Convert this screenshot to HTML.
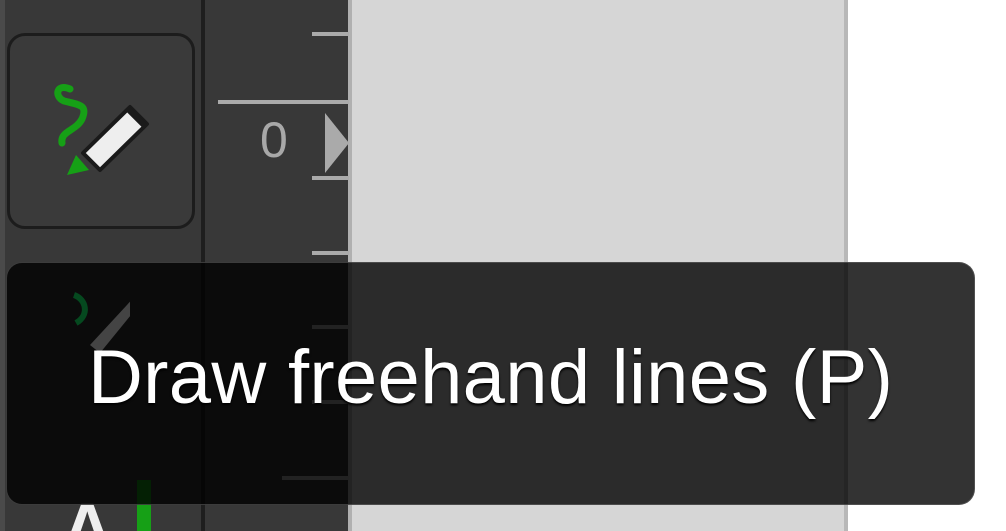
<!DOCTYPE html>
<html><head><style>
html,body{margin:0;padding:0;width:1006px;height:531px;overflow:hidden;background:#fff;position:relative;font-family:"Liberation Sans",Arial,sans-serif}
div{position:absolute;box-sizing:border-box}
</style></head><body>
<div style="left:0;top:0;width:201px;height:531px;background:#383838"></div>
<div style="left:0;top:0;width:5px;height:531px;background:#4a4a4a"></div>
<div style="left:201px;top:0;width:4px;height:531px;background:#1e1e1e"></div>
<div style="left:205px;top:0;width:144px;height:531px;background:#383838"></div>
<div style="left:348px;top:0;width:4px;height:531px;background:#b0b0b0"></div>
<div style="left:352px;top:0;width:492px;height:531px;background:#d6d6d6"></div>
<div style="left:844px;top:0;width:4px;height:531px;background:#b8b8b8"></div>
<div style="left:312px;top:32px;width:37px;height:4px;background:#aaa"></div>
<div style="left:218px;top:100px;width:131px;height:4px;background:#aaa"></div>
<div style="left:312px;top:176px;width:37px;height:4px;background:#aaa"></div>
<div style="left:312px;top:251px;width:37px;height:4px;background:#aaa"></div>
<div style="left:312px;top:325px;width:37px;height:4px;background:#aaa"></div>
<div style="left:312px;top:400px;width:37px;height:4px;background:#aaa"></div>
<div style="left:282px;top:476px;width:67px;height:4px;background:#aaa"></div>
<div style="left:260px;top:110px;font-size:50px;color:#a8a8a8;line-height:60px">0</div>
<svg style="position:absolute;left:325px;top:113px" width="24" height="60"><polygon points="0,0 24,30 0,60" fill="#aaa"/></svg>
<div style="left:7px;top:33px;width:188px;height:196px;border-radius:18px;background:#3a3a3a;border:3px solid #1c1c1c"></div>
<svg style="position:absolute;left:50px;top:75px" width="110" height="110" viewBox="0 0 110 110">
<path d="M20 14 C6 8 4 22 14 26 C30 30 38 30 32 44 C26 56 10 56 12 68" fill="none" stroke="#16a016" stroke-width="7" stroke-linecap="round"/>
<polygon points="26,80 17,100 39,95" fill="#16a016"/>
<polygon points="33,78 80,32 97,49 50,95" fill="#eee" stroke="#1a1a1a" stroke-width="4" stroke-linejoin="round"/>
<line x1="78" y1="34" x2="95" y2="51" stroke="#1a1a1a" stroke-width="6"/>
</svg>
<div style="left:62px;top:488px;height:43px;overflow:hidden;font-size:70px;font-weight:bold;color:#eee;line-height:80px">A</div>
<div style="left:137px;top:480px;width:14px;height:51px;background:#16a016"></div>
<div style="left:6px;top:262px;width:969px;height:243px;border-radius:16px;background:rgba(0,0,0,0.8);border:1px solid rgba(110,110,110,0.5)"></div>
<svg style="position:absolute;left:50px;top:285px" width="80" height="80"><path d="M24 10 C36 14 40 30 26 38" fill="none" stroke="#083" stroke-opacity=".5" stroke-width="6"/><polygon points="40,60 88,8 94,14 50,68" fill="#444"/></svg>
<div style="left:88px;top:333px;height:90px;font-size:76px;color:#fff;line-height:90px;white-space:nowrap;text-shadow:0 2px 2px #000;letter-spacing:0.3px">Draw freehand lines (P)</div>
</body></html>
